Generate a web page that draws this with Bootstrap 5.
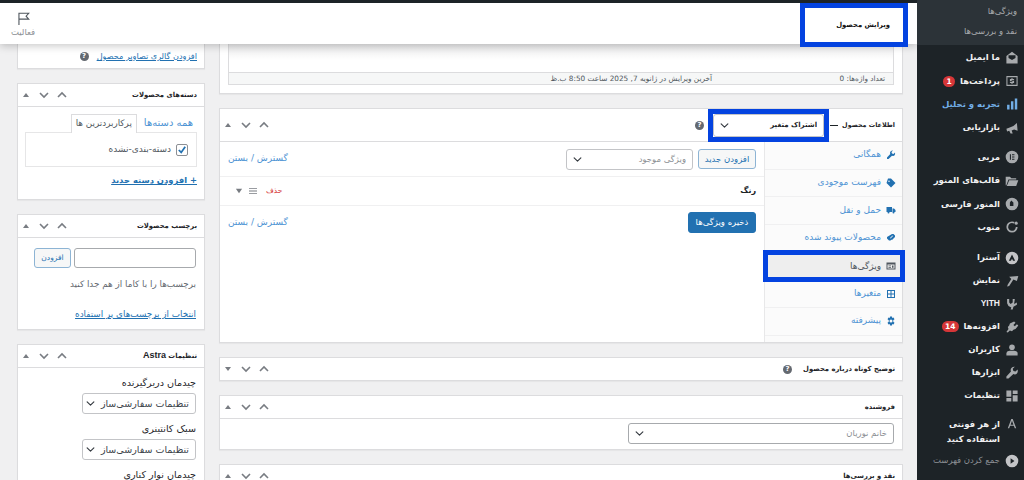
<!doctype html>
<html lang="fa" dir="rtl">
<head>
<meta charset="utf-8">
<title>ویرایش محصول</title>
<link rel="stylesheet" href="https://cdn.jsdelivr.net/npm/bootstrap@5.3.0/dist/css/bootstrap.min.css">
<style>
html,body{height:480px;overflow:hidden}
body{font-family:"DejaVu Sans","Liberation Sans",sans-serif;font-size:8.5px;color:#3c434a;background:#f0f0f1;line-height:1.3}
a{text-decoration:none}
.wp-shell{height:480px;overflow:hidden}
.wp-side{width:107px;flex:none;background:#1d2327;color:#f0f0f1;overflow:hidden;height:480px}
.wp-sub{height:45px;background:#2c3338;color:#a7aaad;padding:1px 7px 0 0;font-size:8.5px}
.wp-sub div{height:20px;line-height:20px}
.wp-item{height:23.4px;padding-right:5px;font-size:8.5px;font-weight:700;gap:5px;white-space:nowrap}
.wp-item svg{width:14px;height:14px;flex:none;fill:#a7aaad}
.wp-item.is-blue{color:#72aee6}
.wp-item.is-blue svg{fill:#72aee6}
.wp-g1{margin-top:1px}.wp-g2{margin-top:6px}.wp-g3{margin-top:7px}
.wp-tight .wp-item{height:23px}
.wp-item.wp-g4{margin-top:10px}
.wp-item.is-tall{height:32px;white-space:normal;line-height:15px;align-items:flex-start!important}
.wp-item.is-dim{color:#8c8f94;font-weight:400}
.wp-pill{background:#d63638;color:#fff;border-radius:8px;font-size:7.5px;line-height:11px;padding:0 3px;min-width:12px;text-align:center;font-weight:700}
.wp-body{flex:1 1 auto;min-width:0;height:480px;overflow:hidden;border-top:3px solid #1d2327}
.wp-top{height:41px;background:#fff;box-shadow:0 2px 8px rgba(0,0,0,.22);position:relative;z-index:3;padding:0 9px 0 0}
.wp-mark{border:5px solid #0443e0}
.wp-title{width:108px;height:44px;margin-bottom:-3px;padding-right:13px;color:#111;font-weight:700;font-size:6.8px;background:#fff}
.wp-act{width:36px;margin-left:5px;color:#8c8f94;font-size:8.5px;line-height:1.2;padding-top:9px;gap:2px}
.wp-act svg{width:13px;height:13px;fill:none;stroke:#50575e;stroke-width:1.7}
.wp-cols{padding:0 14px 0 17px;gap:14px}
.wp-main{width:684px;flex:none}
.wp-aside{width:188px;flex:none}
.wp-box{border:1px solid #dcdcde;border-radius:0;margin-bottom:14px;box-shadow:0 1px 1px rgba(0,0,0,.04);background:#fff;--bs-card-border-color:#dcdcde;--bs-card-bg:#fff}
.wp-box.no-top{border-top:0}
.wp-head{height:23px;padding:0 7px 0 4px;border-bottom:1px solid #dcdcde;background:#fff;color:#1d2327;font-weight:700;font-size:6.8px}
.wp-head.is-closed{height:22px;border-bottom:0;gap:11px}
.wp-head.is-tall{height:33px;font-size:6.4px}
.wp-ctl{margin-right:auto;gap:6px;color:#787c82}
.wp-ctl svg{width:12px;height:12px;stroke:#787c82;fill:none;stroke-width:1.6;flex:none}
.wp-ctl svg.is-tri{width:8px;fill:#787c82;stroke:none;margin-right:2px}
.wp-help{width:9px;height:9px;border-radius:50%;background:#646970;color:#fff;font-size:7px;line-height:9px;text-align:center;font-weight:700;flex:none;display:inline-block}
.wp-editor{height:41px;margin:0 8px;border:1px solid #dcdcde;border-top:0;background:linear-gradient(#e9e9ea,#fff 16px,#fff);display:flex;flex-direction:column;justify-content:flex-end}
.wp-stat{height:12px;background:#f6f7f7;border-top:1px solid #dcdcde;padding:0 8px 0 0;color:#50575e;font-size:7.3px;line-height:11px;display:flex}
.wp-stat span:first-child{width:173px;flex:none}
.wp-dash{width:8px;height:1px;background:#1d2327;margin:0 4px 0 1px}
.wp-picksel{width:121px;height:33px;margin:0 0 0 4px;background:#fff;padding:0;flex:none}
.wp-sel.form-select{font-family:inherit;height:21px;min-height:0;padding:0 6px 0 20px;font-size:8.5px;color:#8c8f94;border:1px solid #c3c4c7;border-radius:3px;background-position:left 6px center;background-size:9px 9px;line-height:19px;box-shadow:none}
.wp-sel.is-dark.form-select{border-color:#a7aaad}
.wp-picksel .wp-sel.form-select{height:23px;border-color:#c3c4c7;font-weight:700;color:#1d2327;font-size:7px}
.wp-panel{height:200px}
.wp-tabs{width:138px;flex:none;border-left:1px solid #e8e8e9;background:#fbfbfb}
.wp-tab{height:27.6px;padding:0 6px 0 0;gap:5px;color:#4f94d4;border-bottom:1px solid #f0f0f1;font-size:9px}
.wp-tab svg{width:10px;height:10px;fill:#2271b1;flex:none}
.wp-tab.is-on{margin:-2px -3px -2px -2px;height:32px;background:#eee;color:#50575e;padding-right:4px;position:relative;z-index:2;border:5px solid #0443e0}
.wp-tab.is-on svg{fill:#50575e}
.wp-tabbody{flex:1 1 auto;min-width:0;background:#fff}
.wp-row{padding:0 8px;gap:5px}
.wp-row.r1{height:35px;border-bottom:1px solid #f0f0f1}
.wp-row.r2{height:29px;border-bottom:1px solid #f0f0f1}
.wp-row.r3{height:33px}
.wp-link{color:#4f94d4;font-size:9px;margin-right:auto}
.wp-btn.btn{font-size:8.5px;line-height:1;padding:0;width:58px;height:20px;border:1px solid #8db4d4;color:#2271b1;background:#f6f7f7;border-radius:3px}
.wp-btn.btn-primary{width:68px;height:21px;background:#2271b1;border-color:#2271b1;color:#fff}
.wp-row .wp-sel{width:127px}
.wp-rm{color:#d63638;font-size:7.5px;margin-right:auto}
.wp-strong{font-weight:700;color:#1d2327;font-size:8px}
.wp-grip{gap:6px;margin-right:4px;margin-left:7px}
.wp-grip svg{width:8px;height:8px;fill:#787c82}
.wp-pad{height:30px;padding:4px 8px}
.wp-u{color:#2271b1;text-decoration:underline;font-size:8.8px}
.wp-gal{height:24px;padding:0 7px;gap:8px}
.wp-gal .wp-u{font-size:8.1px}
.wp-cat{height:92px;padding:6px 7px 0}
.wp-catline{height:19px;gap:7px;padding:0 4px}
.wp-catline a{color:#4f94d4;font-size:10px}
.wp-cattab{height:19px;padding:0 4px;border:1px solid #dcdcde;border-bottom:0;color:#50575e;background:#fff;position:relative;top:1px;font-size:8.8px}
.wp-catbox{height:35px;border:1px solid #e6e6e7;padding:0 8px;gap:5px;color:#50575e;font-size:9px}
.wp-tick{width:12px;height:12px;border:1px solid #8c8f94;border-radius:2px;background:#fff;flex:none;padding:1px}
.wp-tick path{fill:none;stroke:#2271b1;stroke-width:2.2}
.wp-add{display:inline-block;margin-top:8px;font-weight:700;font-size:8.4px}
.wp-tagbody{height:91px;padding:10px 8px 0}
.wp-in.form-control{height:20px;min-height:0;width:122px;flex:none;border:1px solid #a7aaad;border-radius:3px;padding:0 4px}
.wp-in+.wp-btn.btn{width:37px;margin-right:3px;font-size:7.5px}
.wp-hint{color:#646970;margin:11px 0 19px;font-size:8.8px}
.wp-astra{padding:7px 8px 0;font-size:9.6px;color:#1d2327}
.wp-astra .wp-lab{height:15px;line-height:15px;margin-bottom:3px}
.wp-astra .wp-sel.form-select{width:114px;margin-bottom:7px;color:#3c434a;font-size:9.5px;padding-left:14px;background-position:left 3px center}
</style>
</head>
<body>
<div class="wp-shell d-flex">
  <nav class="wp-side">
    <div class="wp-sub"><div>ویژگی‌ها</div><div>نقد و بررسی‌ها</div></div>
    <div class="wp-item d-flex align-items-center wp-g1"><svg viewBox="0 0 20 20"><path d="M10 1l8 6v11H2V7zM5 6v4l5 3 5-3V6z"/></svg><span>ما ایمیل</span></div>
    <div class="wp-item d-flex align-items-center"><svg viewBox="0 0 20 20"><path d="M2 3h16v14H2zm1.500 1.500v11h13v-11zM9 6h2v1h2v1.500H9.500v1H13V13h-2v1H9v-1H7v-1.500h3.500v-1H7V7h2z"/></svg><span>پرداخت‌ها</span><span class="wp-pill">1</span></div>
    <div class="wp-item is-blue d-flex align-items-center"><svg viewBox="0 0 20 20"><path d="M3 11h3.500v7H3zm5.500-5H12v12H8.500zM14 2h3.500v16H14z"/></svg><span>تجربه و تحلیل</span></div>
    <div class="wp-item d-flex align-items-center"><svg viewBox="0 0 20 20"><path d="M17 3l1 11-5-2-3.500 1.500L11 18H8l-2-4-3 1-1-4 3-1 7-3z"/></svg><span>بازاریابی</span></div>
    <div class="wp-item d-flex align-items-center wp-g2"><svg viewBox="0 0 20 20"><path fill-rule="evenodd" d="M10 1a9 9 0 1 0 0 18 9 9 0 0 0 0-18zM7 6h1.500v8H7zm3 0h3.500v1.500H10zm0 3.200h3.500v1.500H10zm0 3.300h3.500V14H10z"/></svg><span>مربی</span></div>
    <div class="wp-item d-flex align-items-center"><svg viewBox="0 0 20 20"><path d="M1 4h6l2 2h7v2H5L2 16H1zm5 5h13l-3 8H2.500z"/></svg><span>قالب‌های المنور</span></div>
    <div class="wp-item d-flex align-items-center"><svg viewBox="0 0 20 20"><path fill-rule="evenodd" d="M10 1a9 9 0 1 0 0 18 9 9 0 0 0 0-18zM9 5l3 3v5H7V8z"/></svg><span>المنور فارسی</span></div>
    <div class="wp-item d-flex align-items-center"><svg viewBox="0 0 20 20"><path d="M10 2a8 8 0 0 1 4 1l-1.500 2A5.500 5.500 0 1 0 15.500 10H18a8 8 0 1 1-8-8z"/><circle cx="16" cy="4.500" r="2.200"/></svg><span>منوب</span></div>
    <div class="wp-tight">
    <div class="wp-item d-flex align-items-center wp-g3"><svg viewBox="0 0 20 20"><path fill="#c3c4c7" fill-rule="evenodd" d="M10 1a9 9 0 1 0 0 18 9 9 0 0 0 0-18zM10 5l4.500 9h-3L10 11l-1.500 3h-3z"/></svg><span>آسترا</span></div>
    <div class="wp-item d-flex align-items-center"><svg viewBox="0 0 20 20"><path d="M19 3l-2 7-5-2-6 9-3 1 1-3 5-8-3-3z"/></svg><span>نمایش</span></div>
    <div class="wp-item d-flex align-items-center"><svg viewBox="0 0 20 20"><path d="M3 3h3v5l2 2 3-2V3h3l-1 7 4-2v3l-5 3-1 4H8l1-3-4-2-2-4z"/></svg><span style="font-family:'Liberation Sans',sans-serif">YITH</span></div>
    <div class="wp-item d-flex align-items-center"><svg viewBox="0 0 20 20"><path d="M13 2l2 2-3 3 2 2 3-3 2 2-4 5-3 1-2 2-3-1-3 3-2-1 3-4-1-3 2-2 1-3z"/></svg><span>افزونه‌ها</span><span class="wp-pill">14</span></div>
    <div class="wp-item d-flex align-items-center"><svg viewBox="0 0 20 20"><circle cx="10" cy="6" r="4"/><path d="M2 18v-3c0-3 3-4 5-4h6c2 0 5 1 5 4v3z"/></svg><span>کاربران</span></div>
    <div class="wp-item d-flex align-items-center"><svg viewBox="0 0 20 20"><path d="M18 5l-3 3-3-1-1-3 3-3c-3-.5-6 1.500-6 5l.5 2L2 15v3h3l7-6.500 2 .5c3 0 5-3 4-7z"/></svg><span>ابزارها</span></div>
    <div class="wp-item d-flex align-items-center"><svg viewBox="0 0 20 20"><path d="M2 2h7v9H2zm9 0h7v5h-7zM2 13h7v5H2zm9-4h7v9h-7z"/></svg><span>تنظیمات</span></div>
    </div>
    <div class="wp-item is-tall d-flex align-items-center wp-g4"><svg viewBox="0 0 20 20"><path d="M9 3h2l5 13h-2l-1.300-3.500H7.300L6 16H4zm-1 8h4l-2-5.500z"/></svg><span>از هر فونتی استفاده کنید</span></div>
    <div class="wp-item is-dim d-flex align-items-center"><svg viewBox="0 0 20 20"><path fill="#c3c4c7" fill-rule="evenodd" d="M10 1a9 9 0 1 0 0 18 9 9 0 0 0 0-18zM13.500 10L8 14V6z"/></svg><span>جمع کردن فهرست</span></div>
  </nav>

  <div class="wp-body">
    <header class="wp-top d-flex align-items-start justify-content-between">
      <div class="wp-title wp-mark d-flex align-items-center">ویرایش محصول</div>
      <div class="wp-act d-flex flex-column align-items-center"><svg viewBox="0 0 20 20"><path d="M3 20V2h15l-4 4.500 4 4.500H3"/></svg><span>فعالیت</span></div>
    </header>
    <div class="wp-cols d-flex align-items-start">
      <section class="wp-main">
        <div class="card wp-box no-top">
          <div class="wp-editor"><div class="wp-stat"><span>تعداد واژه‌ها: 0</span><span>آخرین ویرایش در ژانویه 7, 2025 ساعت 8:50 ب.ظ</span></div></div>
          <div style="height:8px"></div>
        </div>
        <div class="card wp-box">
          <div class="wp-head is-tall d-flex align-items-center">
            <span>اطلاعات محصول</span><span class="wp-dash"></span>
            <div class="wp-picksel wp-mark d-flex align-items-center"><select class="form-select wp-sel"><option>اشتراک متغیر</option></select></div>
            <span class="wp-help">?</span>
            <div class="wp-ctl d-flex align-items-center"><svg viewBox="0 0 12 12"><path d="M2 8l4-4 4 4"/></svg><svg viewBox="0 0 12 12"><path d="M2 4l4 4 4-4"/></svg><svg class="is-tri" viewBox="0 0 8 12"><path d="M4 4l3 4H1z"/></svg></div>
          </div>
          <div class="wp-panel d-flex">
            <div class="wp-tabs">
              <div class="wp-tab d-flex align-items-center"><svg viewBox="0 0 20 20"><path d="M18 5l-3 3-3-1-1-3 3-3c-3-.5-6 1.500-6 5l.5 2L2 15v3h3l7-6.500 2 .5c3 0 5-3 4-7z"/></svg><span>همگانی</span></div>
              <div class="wp-tab d-flex align-items-center"><svg viewBox="0 0 20 20"><path d="M10 1l9 9-9 9-9-9 3-9zM6 5a1.500 1.500 0 1 0 0 3 1.500 1.500 0 0 0 0-3z"/></svg><span>فهرست موجودی</span></div>
              <div class="wp-tab d-flex align-items-center"><svg viewBox="0 0 20 20"><path d="M1 4h11v10H1zm12 3h3l3 3v4h-6z"/><circle cx="5" cy="15" r="2"/><circle cx="15" cy="15" r="2"/></svg><span>حمل و نقل</span></div>
              <div class="wp-tab d-flex align-items-center"><svg viewBox="0 0 20 20"><path d="M12 2h3l3 3v3l-6 6-3-3 5-5-1-1-5 5 3 3-2 2H6l-4-4v-3z"/></svg><span>محصولات پیوند شده</span></div>
              <div class="wp-tab is-on d-flex align-items-center"><svg viewBox="0 0 20 20"><path fill-rule="evenodd" d="M1 3h18v14H1zm2 4v8h14V7zm2 2h5v1.500H5zm0 3h5v1.500H5zm7-3h3v4.500h-3z"/></svg><span>ویژگی‌ها</span></div>
              <div class="wp-tab d-flex align-items-center"><svg viewBox="0 0 20 20"><path fill-rule="evenodd" d="M2 2h16v16H2zm2 2v5h5V4zm7 0v5h5V4zM4 11v5h5v-5zm7 0v5h5v-5z"/></svg><span>متغیرها</span></div>
              <div class="wp-tab d-flex align-items-center"><svg viewBox="0 0 20 20"><path fill-rule="evenodd" d="M8 1h4l.5 3 2.500-1 2 3.500L14.500 8.500v3l2.500 2-2 3.500-2.500-1-.5 3H8l-.5-3-2.500 1-2-3.500 2.500-2v-3L3 6.500 5 3l2.500 1zm2 6a3 3 0 1 0 0 6 3 3 0 0 0 0-6z"/></svg><span>پیشرفته</span></div>
            </div>
            <div class="wp-tabbody">
              <div class="wp-row r1 d-flex align-items-center">
                <button type="button" class="btn wp-btn">افزودن جدید</button>
                <select class="form-select wp-sel"><option>ویژگی موجود</option></select>
                <a class="wp-link" href="#">گسترش / بستن</a>
              </div>
              <div class="wp-row r2 d-flex align-items-center">
                <span class="wp-strong">رنگ</span>
                <span class="wp-rm">حذف</span>
                <span class="wp-grip d-flex align-items-center"><svg viewBox="0 0 9 9"><path d="M0 1h9v1H0zm0 3h9v1H0zm0 3h9v1H0z"/></svg><svg viewBox="0 0 9 9"><path d="M1 2h7L4.500 7z"/></svg></span>
              </div>
              <div class="wp-row r3 d-flex align-items-center">
                <button type="button" class="btn btn-primary wp-btn">ذخیره ویژگی‌ها</button>
                <a class="wp-link" href="#">گسترش / بستن</a>
              </div>
            </div>
          </div>
        </div>
        <div class="card wp-box">
          <div class="wp-head is-closed d-flex align-items-center"><span>توضیح کوتاه درباره محصول</span><span class="wp-help">?</span>
            <div class="wp-ctl d-flex align-items-center"><svg viewBox="0 0 12 12"><path d="M2 8l4-4 4 4"/></svg><svg viewBox="0 0 12 12"><path d="M2 4l4 4 4-4"/></svg><svg class="is-tri" viewBox="0 0 8 12"><path d="M4 8l3-4H1z"/></svg></div></div>
        </div>
        <div class="card wp-box">
          <div class="wp-head d-flex align-items-center"><span>فروشنده</span>
            <div class="wp-ctl d-flex align-items-center"><svg viewBox="0 0 12 12"><path d="M2 8l4-4 4 4"/></svg><svg viewBox="0 0 12 12"><path d="M2 4l4 4 4-4"/></svg><svg class="is-tri" viewBox="0 0 8 12"><path d="M4 4l3 4H1z"/></svg></div></div>
          <div class="wp-pad"><select class="form-select wp-sel is-dark" style="width:266px"><option>خانم نوریان</option></select></div>
        </div>
        <div class="card wp-box">
          <div class="wp-head d-flex align-items-center"><span>نقد و بررسی‌ها</span>
            <div class="wp-ctl d-flex align-items-center"><svg viewBox="0 0 12 12"><path d="M2 8l4-4 4 4"/></svg><svg viewBox="0 0 12 12"><path d="M2 4l4 4 4-4"/></svg><svg class="is-tri" viewBox="0 0 8 12"><path d="M4 4l3 4H1z"/></svg></div></div>
        </div>
      </section>

      <aside class="wp-aside">
        <div class="card wp-box no-top">
          <div class="wp-gal d-flex align-items-center"><a class="wp-u" href="#">افزودن گالری تصاویر محصول</a><span class="wp-help">?</span></div>
        </div>
        <div class="card wp-box">
          <div class="wp-head d-flex align-items-center"><span>دسته‌های محصولات</span>
            <div class="wp-ctl d-flex align-items-center"><svg viewBox="0 0 12 12"><path d="M2 8l4-4 4 4"/></svg><svg viewBox="0 0 12 12"><path d="M2 4l4 4 4-4"/></svg><svg class="is-tri" viewBox="0 0 8 12"><path d="M4 4l3 4H1z"/></svg></div></div>
          <div class="wp-cat">
            <div class="wp-catline d-flex align-items-center"><a href="#">همه دسته‌ها</a><span class="wp-cattab d-flex align-items-center">پرکاربردترین ها</span></div>
            <div class="wp-catbox d-flex align-items-center"><span class="wp-tick d-flex"><svg viewBox="0 0 10 10"><path d="M1 5l3 3 5-7"/></svg></span><span>دسته-بندی-نشده</span></div>
            <a class="wp-u wp-add" href="#">+ افزودن دسته جدید</a>
          </div>
        </div>
        <div class="card wp-box">
          <div class="wp-head d-flex align-items-center"><span>برچسب محصولات</span>
            <div class="wp-ctl d-flex align-items-center"><svg viewBox="0 0 12 12"><path d="M2 8l4-4 4 4"/></svg><svg viewBox="0 0 12 12"><path d="M2 4l4 4 4-4"/></svg><svg class="is-tri" viewBox="0 0 8 12"><path d="M4 4l3 4H1z"/></svg></div></div>
          <div class="wp-tagbody">
            <div class="d-flex"><input class="form-control wp-in" type="text" aria-label="برچسب"><button type="button" class="btn wp-btn">افزودن</button></div>
            <div class="wp-hint">برچسب‌ها را با کاما از هم جدا کنید</div>
            <a class="wp-u" href="#">انتخاب از برچسب‌های پر استفاده</a>
          </div>
        </div>
        <div class="card wp-box">
          <div class="wp-head d-flex align-items-center"><span>تنظیمات <span style="font-family:'Liberation Sans',sans-serif;font-size:9px">Astra</span></span>
            <div class="wp-ctl d-flex align-items-center"><svg viewBox="0 0 12 12"><path d="M2 8l4-4 4 4"/></svg><svg viewBox="0 0 12 12"><path d="M2 4l4 4 4-4"/></svg><svg class="is-tri" viewBox="0 0 8 12"><path d="M4 4l3 4H1z"/></svg></div></div>
          <div class="wp-astra">
            <div class="wp-lab">چیدمان دربرگیرنده</div>
            <select class="form-select wp-sel"><option>تنظیمات سفارشی‌ساز</option></select>
            <div class="wp-lab">سبک کانتینری</div>
            <select class="form-select wp-sel"><option>تنظیمات سفارشی‌ساز</option></select>
            <div class="wp-lab">چیدمان نوار کناری</div>
          </div>
        </div>
      </aside>
    </div>
  </div>
</div>
<script src="https://cdn.jsdelivr.net/npm/bootstrap@5.3.0/dist/js/bootstrap.bundle.min.js"></script>
</body>
</html>
